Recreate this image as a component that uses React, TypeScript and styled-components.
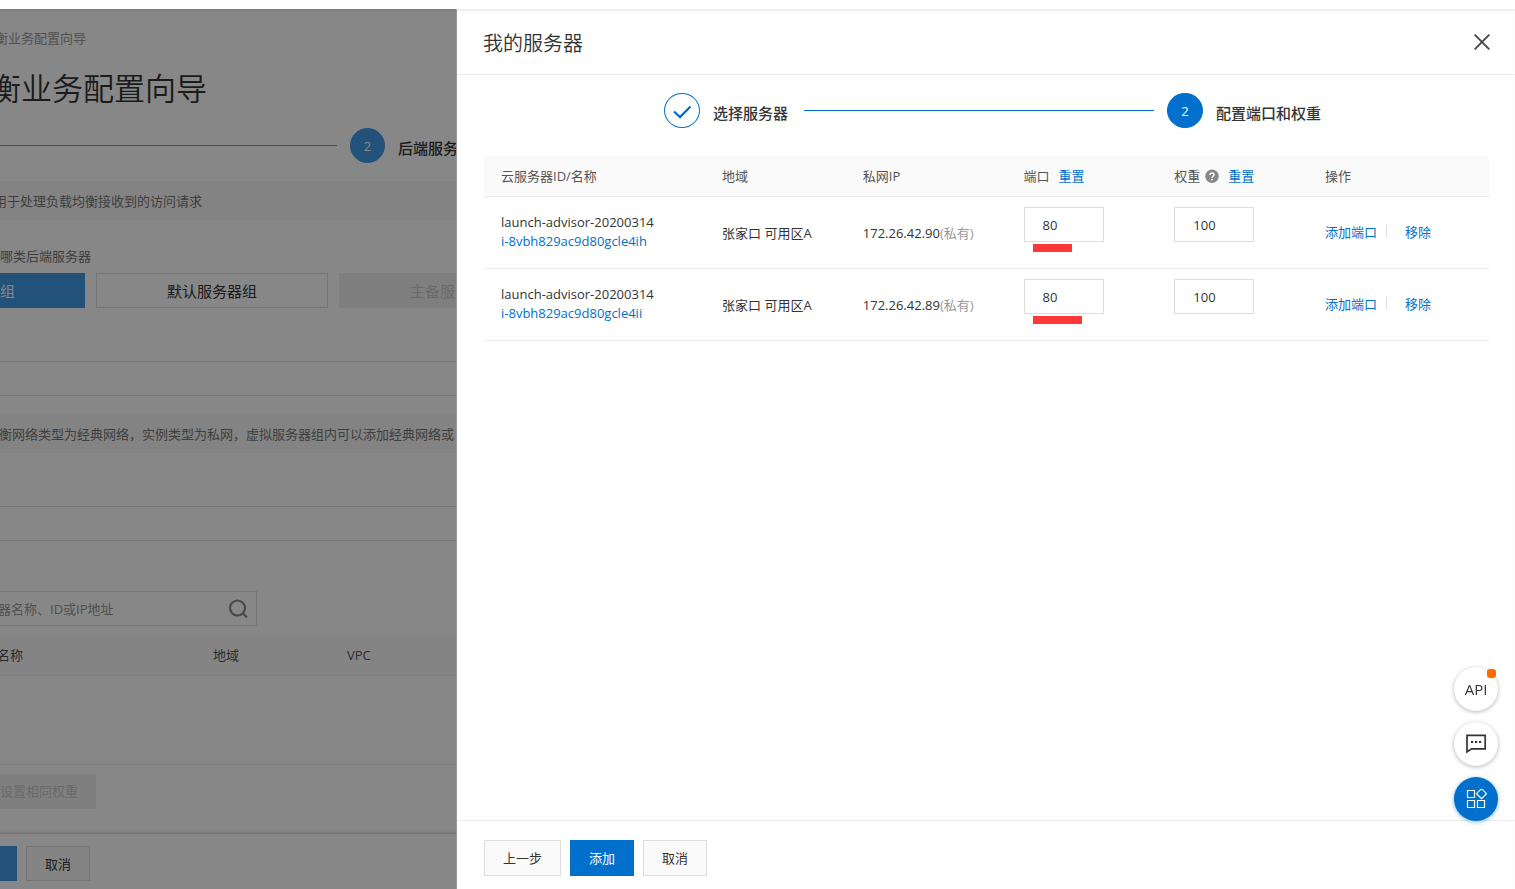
import React from 'react';
import styled, { createGlobalStyle } from 'styled-components';

const BLUE = '#0070cc';
const SOFT_BLUE = '#4199e4';

const GlobalStyle = createGlobalStyle`
  *, *::before, *::after { box-sizing: border-box; }
  body {
    margin: 0;
    background: #fff;
    color: #333;
    font: 13px/20px "Open Sans", "Noto Sans CJK SC", sans-serif;
    overflow: hidden;
  }
  button, input { font: inherit; color: inherit; }
  h1, h2, p { margin: 0; font-weight: 350; }
`;

/* ---------- shared controls ---------- */

const Button = styled.button<{ $primary?: boolean; $size?: 'large' }>`
  height: ${p => (p.$size ? 36 : 35)}px;
  padding: 0 17px;
  border: 1px solid ${p => (p.$primary ? BLUE : '#dedede')};
  background: ${p => (p.$primary ? BLUE : '#fafafa')};
  color: ${p => (p.$primary ? '#fff' : '#333')};
  min-width: 64px;
  white-space: nowrap;
  flex: none;
`;

const WideButton = styled(Button)`
  min-width: 77px;
`;

const StepBar = styled.ol<{ $inset: string }>`
  display: flex;
  align-items: center;
  list-style: none;
  margin: 0;
  padding: ${p => p.$inset};
`;

const StepItem = styled.li`
  display: flex;
  align-items: center;
  gap: 13px;
  flex: none;
`;

const StepLine = styled.li`
  flex: 1;
  height: 1px;
  margin: 0 13px;
  background: ${BLUE};
`;

const StepDot = styled.span<{ $done?: boolean }>`
  display: flex;
  align-items: center;
  justify-content: center;
  width: 36px;
  height: 35px;
  border: 1px solid ${BLUE};
  border-radius: 50%;
  background: ${p => (p.$done ? '#fff' : BLUE)};
  color: ${p => (p.$done ? BLUE : '#fff')};
`;

const StepLabel = styled.span`
  min-width: 78px;
  padding-top: 4px;
  font-size: 15px;
  font-weight: 500;
  white-space: nowrap;
`;

/* ---------- wizard page behind the drawer ---------- */

const Shell = styled.div`
  display: flex;
  flex-direction: column;
  height: 100vh;
  overflow: hidden;
`;

const TopBar = styled.header`
  flex: none;
  height: 9px;
  background: #fff;
`;

const Wizard = styled.main`
  position: relative;
  flex: 1;
  display: flex;
  flex-direction: column;
  overflow: hidden;
`;

const Backdrop = styled.div`
  position: absolute;
  inset: 0;
  background: rgba(0, 0, 0, 0.47);
  box-shadow: inset 0 4px 3px -3px rgba(0, 0, 0, 0.15);
`;

const Crumb = styled.nav`
  margin: 19px 0 0 -5px;
  color: #999;
`;

const PageTitle = styled.h1`
  margin: 18px 0;
  margin-left: -10px;
  font-size: 31px;
  line-height: 44px;
`;

const WizardLine = styled(StepLine)`
  flex: none;
  width: 337px;
  margin-left: 0;
  background: ${SOFT_BLUE};
`;

const WizardDot = styled(StepDot)`
  width: 35px;
  border-color: ${SOFT_BLUE};
  background: ${SOFT_BLUE};
`;

const Notice = styled.p<{ $indent: number }>`
  margin-top: 18px;
  padding: 10px 0 9px;
  background: #f7f7f7;
  color: #777;
  font-weight: 400;
  white-space: nowrap;
  text-indent: ${p => p.$indent}px;
`;

const Question = styled.p`
  margin: 26px 0 7px;
  color: #777;
  font-weight: 400;
`;

const GroupTabs = styled.div`
  display: flex;
  gap: 11px;
  margin-left: -147px;
`;

const GroupTab = styled.button<{ $active?: boolean }>`
  flex: none;
  width: 232px;
  height: 35px;
  border: 1px solid ${p => (p.$active ? SOFT_BLUE : '#dedede')};
  background: ${p => (p.$active ? SOFT_BLUE : '#fff')};
  color: ${p => (p.$active ? '#fff' : '#333')};
  font-size: 15px;
  text-align: ${p => (p.$active ? 'left' : 'center')};
  padding: 0 0 0 ${p => (p.$active ? 146 : 0)}px;
  &:disabled {
    border-color: #f0f0f0;
    background: #f0f0f0;
    color: #c8c8c8;
  }
`;

const LineInput = styled.input`
  flex: none;
  height: 35px;
  margin: 53px 0 0 -1px;
  border: 1px solid #dedede;
  background: #fff;
`;

const SearchBox = styled.label`
  display: flex;
  align-items: center;
  justify-content: space-between;
  width: 258px;
  height: 35px;
  margin: 50px 0 9px -1px;
  padding-right: 8px;
  border: 1px solid #dedede;
  color: #888;
  input {
    width: 200px;
    padding: 0;
    border: 0;
    background: none;
    text-indent: -2px;
  }
  input::placeholder { color: #999; }
`;

const GroupTable = styled.table`
  width: 100%;
  table-layout: fixed;
  border-collapse: collapse;
  th {
    height: 40px;
    padding: 0;
    background: #fafafa;
    border-bottom: 1px solid #ebebeb;
    color: #555;
    font-weight: 400;
    text-align: left;
  }
  th:first-child { text-indent: -3px; }
  td {
    height: 89px;
    border-bottom: 1px solid #ebebeb;
  }
`;

const BatchButton = styled.button`
  align-self: flex-start;
  height: 35px;
  margin: 9px 0 0;
  padding: 0 18px 0 0;
  border: 0;
  background: #f0f0f0;
  color: #c8c8c8;
`;

const WizardFooter = styled.footer`
  display: flex;
  gap: 9px;
  margin-top: auto;
  padding: 12px 0 8px;
  border-top: 1px solid #dedede;
  box-shadow: 0 -1px 3px rgba(0, 0, 0, 0.12);
`;

const NextButton = styled.button`
  width: 17px;
  border: 0;
  background: ${SOFT_BLUE};
`;

/* ---------- drawer ---------- */

const Drawer = styled.section`
  position: fixed;
  inset: 9px 0 0 456px;
  display: flex;
  flex-direction: column;
  border-left: 1px solid #999;
  background: #fff;
  box-shadow: inset 0 3px 3px -1px rgba(0, 0, 0, 0.08);
`;

const DrawerHeader = styled.header`
  display: flex;
  align-items: center;
  justify-content: space-between;
  height: 66px;
  padding: 0 25px 0 26px;
  border-bottom: 1px solid #ebebeb;
`;

const DrawerTitle = styled.h2`
  padding-top: 4px;
  font-size: 20px;
  line-height: 28px;
`;

const IconButton = styled.button`
  display: flex;
  padding: 0;
  border: 0;
  background: none;
  color: #444;
`;

const DrawerBody = styled.div`
  flex: 1;
  padding: 18px 26px 0 27px;
`;

const ServerTable = styled.table`
  width: 100%;
  margin-top: 28px;
  table-layout: fixed;
  border-collapse: separate;
  border-spacing: 0;
  th, td {
    padding: 0 0 0 17px;
    border-bottom: 1px solid #ebebeb;
    text-align: left;
    font-weight: 400;
    white-space: nowrap;
  }
  th {
    height: 41px;
    background: #fafafa;
    color: #555;
  }
  td { height: 72px; }
`;

const Col = styled.col<{ $w: number }>`
  width: ${p => p.$w}%;
`;

const Link = styled.a`
  color: ${BLUE};
  text-decoration: none;
`;

const HeadCell = styled.span`
  display: flex;
  align-items: center;
  gap: 9px;
`;

const WithHelp = styled.span`
  display: flex;
  align-items: center;
  gap: 5px;
`;

const ServerName = styled.div`
  display: flex;
  flex-direction: column;
  line-height: 19px;
  padding-bottom: 2px;
`;

const Muted = styled.span`
  color: #999;
`;

const FieldCell = styled.td`
  vertical-align: top;
`;

const NumberInput = styled.input`
  display: block;
  width: 80px;
  height: 35px;
  margin-top: 10px;
  padding: 0 8px 0 18px;
  border: 1px solid #dedede;
  outline: none;
`;

const Marker = styled.div<{ $width: number }>`
  width: ${p => p.$width}px;
  height: 8px;
  margin: 2px 0 0 9px;
  background: #fc3838;
`;

const Actions = styled.div`
  display: flex;
  align-items: center;
  padding-bottom: 2px;
`;

const Divider = styled.span`
  width: 1px;
  height: 13px;
  margin: 0 18px 0 9px;
  background: #dedede;
`;

const DrawerFooter = styled.footer`
  display: flex;
  gap: 9px;
  padding: 19px 27px 13px;
  border-top: 1px solid #ebebeb;
`;

/* ---------- floating tools ---------- */

const FloatBar = styled.aside`
  position: fixed;
  right: 17px;
  bottom: 68px;
  display: flex;
  flex-direction: column;
  gap: 11px;
`;

const FloatButton = styled.button<{ $primary?: boolean }>`
  position: relative;
  display: flex;
  align-items: center;
  justify-content: center;
  width: 44px;
  height: 44px;
  padding: 0;
  border: 0;
  border-radius: 50%;
  background: ${p => (p.$primary ? BLUE : '#fff')};
  color: ${p => (p.$primary ? '#fff' : '#333')};
  font-size: 15px;
  box-shadow: 0 1px 4px ${p => (p.$primary ? 'rgba(0,112,204,.5)' : 'rgba(0,0,0,.3)')};
`;

const Dot = styled.span`
  position: absolute;
  top: 2px;
  right: 2px;
  width: 9px;
  height: 9px;
  border-radius: 3px;
  background: #ff6a00;
`;

const servers = [
  { name: 'launch-advisor-20200314', id: 'i-8vbh829ac9d80gcle4ih', ip: '172.26.42.90', mark: 39 },
  { name: 'launch-advisor-20200314', id: 'i-8vbh829ac9d80gcle4ii', ip: '172.26.42.89', mark: 49 },
];

const CheckIcon = () => (
  <svg width="20" height="16" viewBox="0 0 20 16" fill="none" stroke="currentColor" strokeWidth="2.2">
    <path d="M2 8.500l6 5.600L18.500 3.500" />
  </svg>
);

const CloseIcon = () => (
  <svg width="16" height="16" viewBox="0 0 16 16" fill="none" stroke="currentColor" strokeWidth="1.8">
    <path d="M.7.7l14.600 14.600M15.300.7L.7 15.300" />
  </svg>
);

const SearchIcon = () => (
  <svg width="20" height="20" viewBox="0 0 20 20" fill="none" stroke="currentColor" strokeWidth="2.200">
    <circle cx="9.500" cy="9" r="7.500" />
    <path d="M15 14.500l4 4" />
  </svg>
);

const HelpIcon = () => (
  <svg width="14" height="14" viewBox="0 0 14 14" fill="none" aria-label="帮助">
    <circle cx="7" cy="7.300" r="6.700" fill="#888" />
    <path d="M5 6c0-2.700 4-2.600 4-.2C9 7.300 7 7.200 7 8.800M7 9.800v1.500" stroke="#fff" strokeWidth="1.500" />
  </svg>
);

const ChatIcon = () => (
  <svg width="22" height="20" viewBox="0 0 22 20" fill="none" stroke="currentColor" strokeWidth="1.700">
    <path d="M2 1.300h18.200v13.600H6.500L2 18z" />
    <path d="M6 8h2.200M10 8h2.200M14 8h2.200" strokeWidth="2" />
  </svg>
);

const AppsIcon = () => (
  <svg width="22" height="20" viewBox="0 0 22 20" fill="none" stroke="currentColor" strokeWidth="1.200">
    <path d="M2.500 1.500h7v7h-7zM2.500 11.500h7v7h-7zM12.500 11.500h7v7h-7zM16.500-.3l5 5-5 5-5-5z" />
  </svg>
);

export default function App() {
  return (
    <Shell>
      <GlobalStyle />
      <TopBar />
      <Wizard>
        <Crumb>衡业务配置向导</Crumb>
        <PageTitle>衡业务配置向导</PageTitle>
        <StepBar $inset="0">
          <WizardLine />
          <StepItem>
            <WizardDot>2</WizardDot>
            <StepLabel>后端服务器</StepLabel>
          </StepItem>
        </StepBar>
        <Notice $indent={-6}>用于处理负载均衡接收到的访问请求</Notice>
        <Question>哪类后端服务器</Question>
        <GroupTabs>
          <GroupTab $active>组</GroupTab>
          <GroupTab>默认服务器组</GroupTab>
          <GroupTab disabled>主备服务器组</GroupTab>
        </GroupTabs>
        <LineInput aria-label="服务器组名称" />
        <Notice $indent={-1}>
          衡网络类型为经典网络，实例类型为私网，虚拟服务器组内可以添加经典网络或
        </Notice>
        <LineInput aria-label="服务器组备注" />
        <SearchBox>
          <input aria-label="搜索服务器" placeholder="器名称、ID或IP地址" />
          <SearchIcon />
        </SearchBox>
        <GroupTable>
          <colgroup>
            <col width="213" />
            <col width="134" />
            <col />
          </colgroup>
          <thead>
            <tr>
              <th>名称</th>
              <th>地域</th>
              <th>VPC</th>
            </tr>
          </thead>
          <tbody>
            <tr>
              <td colSpan={3} />
            </tr>
          </tbody>
        </GroupTable>
        <BatchButton disabled>设置相同权重</BatchButton>
        <WizardFooter>
          <NextButton aria-label="下一步" />
          <Button>取消</Button>
        </WizardFooter>
        <Backdrop />
      </Wizard>

      <Drawer aria-label="我的服务器">
        <DrawerHeader>
          <DrawerTitle>我的服务器</DrawerTitle>
          <IconButton aria-label="关闭">
            <CloseIcon />
          </IconButton>
        </DrawerHeader>
        <DrawerBody>
          <StepBar $inset="0 168px 0 180px">
            <StepItem>
              <StepDot $done>
                <CheckIcon />
              </StepDot>
              <StepLabel>选择服务器</StepLabel>
            </StepItem>
            <StepLine />
            <StepItem>
              <StepDot>2</StepDot>
              <StepLabel>配置端口和权重</StepLabel>
            </StepItem>
          </StepBar>
          <ServerTable>
            <colgroup>
              {[22, 14, 16, 15, 15, 18].map((w, i) => (
                <Col key={i} $w={w} />
              ))}
            </colgroup>
            <thead>
              <tr>
                <th>云服务器ID/名称</th>
                <th>地域</th>
                <th>私网IP</th>
                <th>
                  <HeadCell>
                    端口 <Link href="#port">重置</Link>
                  </HeadCell>
                </th>
                <th>
                  <HeadCell>
                    <WithHelp>
                      权重 <HelpIcon />
                    </WithHelp>
                    <Link href="#weight">重置</Link>
                  </HeadCell>
                </th>
                <th>操作</th>
              </tr>
            </thead>
            <tbody>
              {servers.map(s => (
                <tr key={s.id}>
                  <td>
                    <ServerName>
                      <span>{s.name}</span>
                      <Link href={`#${s.id}`}>{s.id}</Link>
                    </ServerName>
                  </td>
                  <td>张家口 可用区A</td>
                  <td>
                    {s.ip}
                    <Muted>(私有)</Muted>
                  </td>
                  <FieldCell>
                    <NumberInput aria-label="端口" defaultValue="80" />
                    <Marker $width={s.mark} />
                  </FieldCell>
                  <FieldCell>
                    <NumberInput aria-label="权重" defaultValue="100" />
                  </FieldCell>
                  <td>
                    <Actions>
                      <Link href="#add">添加端口</Link>
                      <Divider />
                      <Link href="#remove">移除</Link>
                    </Actions>
                  </td>
                </tr>
              ))}
            </tbody>
          </ServerTable>
        </DrawerBody>
        <DrawerFooter>
          <WideButton $size="large">上一步</WideButton>
          <Button $size="large" $primary>
            添加
          </Button>
          <Button $size="large">取消</Button>
        </DrawerFooter>
      </Drawer>

      <FloatBar>
        <FloatButton>
          API
          <Dot />
        </FloatButton>
        <FloatButton aria-label="反馈">
          <ChatIcon />
        </FloatButton>
        <FloatButton $primary aria-label="应用">
          <AppsIcon />
        </FloatButton>
      </FloatBar>
    </Shell>
  );
}
